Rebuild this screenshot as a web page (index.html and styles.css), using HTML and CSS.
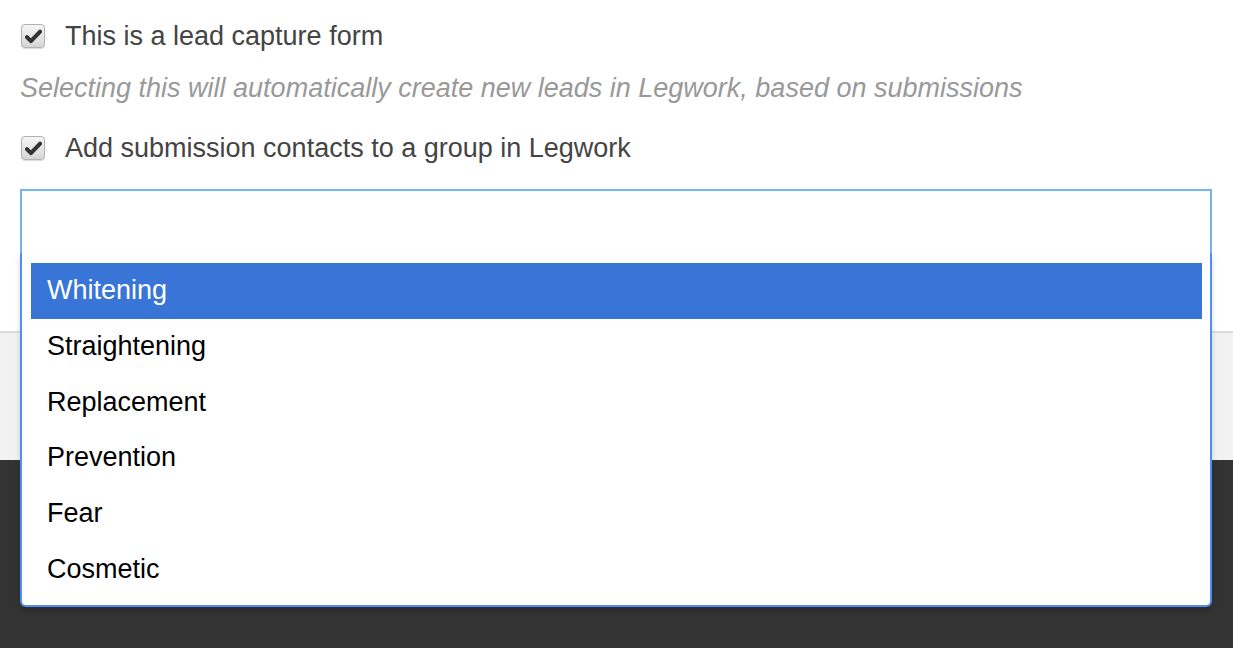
FILE: index.html
```html
<!DOCTYPE html>
<html lang="en">
<head>
  <meta charset="UTF-8">
  <title>Lead capture settings</title>
  <link rel="stylesheet" href="styles.css">
</head>
<body>
  <div class="form">
    <label class="check-row">
      <span class="checkbox">
        <svg width="17" height="15" viewBox="0 0 16 14"><path d="M1.8 7.6 L5.6 11.4 L14.2 2.4" fill="none" stroke="#333" stroke-width="3.8" stroke-linecap="round" stroke-linejoin="round"/></svg>
      </span>
      <span>This is a lead capture form</span>
    </label>
    <p class="hint">Selecting this will automatically create new leads in Legwork, based on submissions</p>
    <label class="check-row">
      <span class="checkbox">
        <svg width="17" height="15" viewBox="0 0 16 14"><path d="M1.8 7.6 L5.6 11.4 L14.2 2.4" fill="none" stroke="#333" stroke-width="3.8" stroke-linecap="round" stroke-linejoin="round"/></svg>
      </span>
      <span>Add submission contacts to a group in Legwork</span>
    </label>

    <div class="chosen">
      <div class="choices"></div>
      <ul class="results">
        <li class="highlighted">Whitening</li>
        <li>Straightening</li>
        <li>Replacement</li>
        <li>Prevention</li>
        <li>Fear</li>
        <li>Cosmetic</li>
      </ul>
    </div>
  </div>

  <div class="actions-bar"></div>
  <div class="footer"></div>
</body>
</html>
```

FILE: styles.css
```css
body {
  margin: 0;
  font-family: "Liberation Sans", Arial, sans-serif;
  background: #333;
  color: #444;
}
.form {
  background: white;
  height: 331px;
  box-sizing: border-box;
  padding: 20px 21px 0 20px;
}
.check-row {
  display: flex;
  align-items: center;
  height: 32px;
  font-size: 27px;
  color: #444;
}
.checkbox {
  width: 22px;
  height: 22px;
  margin: 0 20px 0 1px;
  border: 1px solid #b0b0b0;
  border-radius: 4px;
  background: linear-gradient(#f6f6f6, #d6d6d6);
  box-shadow: 0 1px 1px rgba(0,0,0,0.15);
  display: flex;
  align-items: center;
  justify-content: center;
}
.hint {
  margin: 20px 0 28px;
  font-size: 27px;
  line-height: 32px;
  font-style: italic;
  color: #999;
}
.chosen {
  position: relative;
  margin-top: 25px;
}
.choices {
  height: 64px;
  box-sizing: border-box;
  border: 2px solid #72b5f4;
  border-bottom: none;
  background: white;
}
.results {
  position: absolute;
  top: 100%;
  left: 0;
  right: 0;
  z-index: 10;
  margin: 0;
  padding: 10px 8px 7px 9px;
  list-style: none;
  background: white;
  border: 2px solid #4f8ff5;
  border-top: none;
  border-radius: 0 0 6px 6px;
  box-shadow: 0 4px 6px rgba(0,0,0,0.15);
}
.results li {
  height: 55.8px;
  line-height: 55.8px;
  padding-left: 16px;
  font-size: 27px;
  color: #000;
}
.results li.highlighted {
  background: #3875d7;
  color: white;
}
.actions-bar {
  height: 127px;
  background: #f2f2f2;
  border-top: 2px solid #dcdcdc;
}
.footer {
  height: 188px;
  background: #333;
}
```
